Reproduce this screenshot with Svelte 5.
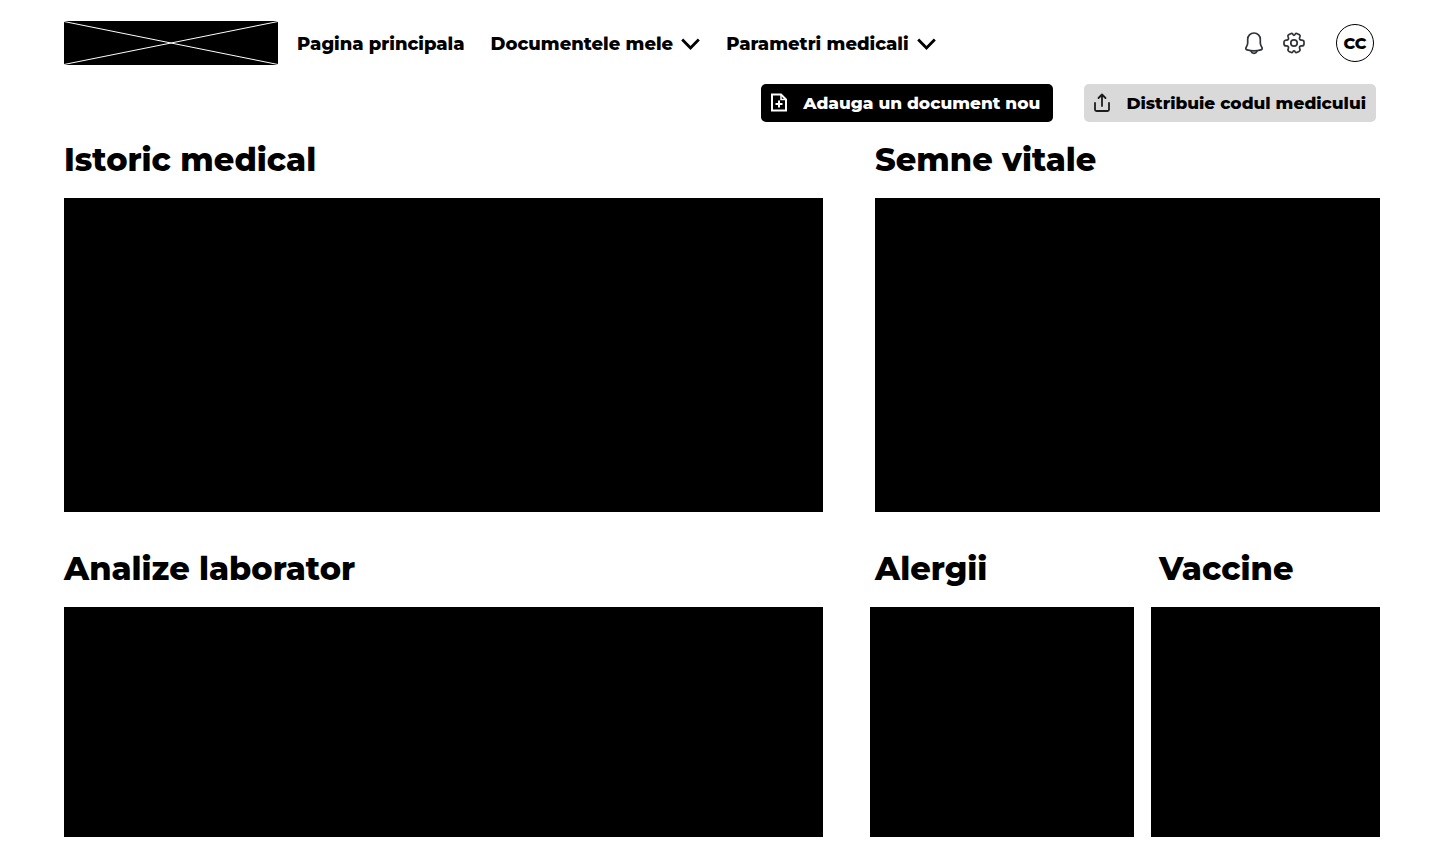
<script>
  const menus = ['Documentele mele', 'Parametri medicali'];
</script>

<div class="page">
  <header>
    <svg class="logo" viewBox="0 0 214 44" preserveAspectRatio="none" role="img" aria-label="Logo">
      <rect width="214" height="44" fill="#000" />
      <path d="M0 .5 214 43.5M0 43.5 214 .5" stroke="#fff" fill="none" />
    </svg>
    <nav>
      <a href="#principala">Pagina principala</a>
      {#each menus as label}
        <button type="button" class="menu">
          {label}
          <svg width="19" height="12" viewBox="0 0 19 12" aria-hidden="true">
            <path d="M1.2 1.5 9.5 10 17.8 1.5" fill="none" stroke="#000" stroke-width="2.8" />
          </svg>
        </button>
      {/each}
    </nav>
    <div class="tools">
      <button type="button" aria-label="Notificari">
        <svg width="20" height="24" viewBox="0 0 20 24" fill="none" stroke="#30343a" stroke-width="1.7" stroke-linecap="round" stroke-linejoin="round">
          <path d="M10 2C6.3 2 3.700 4.800 3.700 8.200V12c0 1.800-.5 2.700-1.500 4.200-.8 1.200-.4 2.300 1 2.700 4.400 1.300 9.200 1.300 13.600 0 1.400-.4 1.800-1.500 1-2.700C16.800 14.700 16.300 13.800 16.300 12V8.200C16.300 4.800 13.700 2 10 2Z" />
          <path d="M7 20.300c.5 1.300 1.600 2 3 2s2.500-.7 3-2" />
        </svg>
      </button>
      <button type="button" aria-label="Setari">
        <svg width="24" height="24" viewBox="0 0 24 24" fill="none" stroke="#30343a" stroke-width="1.7" stroke-linejoin="round">
          <circle cx="12" cy="12" r="3.200" />
          <path d="M8.700 2.700 7 3.600c-1 .6-1.300 1.500-.8 2.500.9 1.700.1 3-1.800 3-1.300 0-2.400.8-2.400 2v1.800c0 1.200 1.100 2 2.400 2 1.900 0 2.700 1.300 1.800 3-.5 1-.2 1.900.8 2.500l1.700.9c.9.5 1.700.2 2.200-.6.7-1.300 1.500-1.300 2.200 0 .5.8 1.300 1.100 2.200.6l1.700-.9c1-.6 1.300-1.500.8-2.500-.9-1.700-.1-3 1.800-3 1.300 0 2.400-.8 2.400-2v-1.800c0-1.200-1.100-2-2.400-2-1.900 0-2.700-1.300-1.800-3 .5-1 .2-1.900-.8-2.500l-1.700-.9c-.9-.5-1.700-.2-2.200.6-.7 1.300-1.500 1.300-2.200 0-.5-.8-1.300-1.100-2.200-.6Z" />
        </svg>
      </button>
      <button type="button" class="avatar">CC</button>
    </div>
  </header>

  <div class="actions">
    <button type="button" class="add">
      <svg width="18" height="20" viewBox="0 0 18 20" fill="none" stroke="#fff" stroke-width="2" aria-hidden="true">
        <path d="M2 1.500H11L16 6.500V17.500H2Z" />
        <path d="M11 1.500V6.500H16" stroke-width="1.500" />
        <path d="M9 7.500V14.500M5.500 11H12.500" />
      </svg>
      Adauga un document nou
    </button>
    <button type="button" class="share">
      <svg width="18" height="20" viewBox="0 0 18 20" fill="none" stroke="#1c1c1c" stroke-width="1.800" stroke-linecap="round" stroke-linejoin="round" aria-hidden="true">
        <path d="M9 13V2M5.500 5 9 1.500 12.500 5M2 10V16.500Q2 18 3.500 18H14.500Q16 18 16 16.500V10" />
      </svg>
      Distribuie codul medicului
    </button>
  </div>

  <main>
    <section class="history">
      <h2>Istoric medical</h2>
      <div class="panel"></div>
    </section>
    <section class="vitals">
      <h2>Semne vitale</h2>
      <div class="panel"></div>
    </section>
    <section class="labs">
      <h2>Analize laborator</h2>
      <div class="panel low"></div>
    </section>
    <section class="allergies">
      <h2>Alergii</h2>
      <div class="panel low"></div>
    </section>
    <section class="vaccines">
      <h2>Vaccine</h2>
      <div class="panel low"></div>
    </section>
  </main>
</div>

<style>
  :global(body) {
    background: #fff;
  }
  .page {
    padding: 21px 60px 31px 64px;
    font-family: Montserrat, Inter, sans-serif;
    font-weight: 800;
    color: #000;
  }
  button {
    display: flex;
    align-items: center;
    padding: 0;
    border: 0;
    background: none;
    color: inherit;
    font: inherit;
    white-space: nowrap;
    cursor: pointer;
  }
  svg {
    display: block;
    flex: none;
  }
  header {
    display: flex;
    align-items: center;
    height: 44px;
  }
  .logo {
    width: 214px;
    height: 44px;
  }
  nav {
    display: flex;
    align-items: center;
    gap: 26px;
    margin-left: 19px;
    padding-top: 2px;
    font-size: 18px;
    line-height: 24px;
  }
  nav a {
    color: inherit;
    text-decoration: none;
    white-space: nowrap;
  }
  .menu {
    gap: 8px;
  }
  .tools {
    display: flex;
    align-items: center;
    gap: 18px;
    margin-left: auto;
    padding-right: 6px;
  }
  .avatar {
    justify-content: center;
    box-sizing: border-box;
    width: 38px;
    height: 38px;
    margin-left: 12px;
    border: 1px solid #000;
    border-radius: 50%;
    font-size: 16px;
  }
  .actions {
    display: flex;
    justify-content: flex-end;
    gap: 31px;
    margin-top: 19px;
    padding-right: 4px;
    font-size: 17px;
    line-height: 22px;
  }
  .actions button {
    height: 38px;
    gap: 15px;
    padding: 0 10px 0 9px;
    border-radius: 5px;
  }
  .actions .add {
    padding-right: 13px;
    background: #000;
    color: #fff;
  }
  .actions .share {
    background: #d9d9d9;
  }
  main {
    display: grid;
    grid-template-columns: 759fr 47fr 264fr 17fr 229fr;
    row-gap: 35px;
    margin-top: 16px;
  }
  .history,
  .labs {
    grid-column: 1;
  }
  .vitals {
    grid-column: 3 / 6;
    padding-left: 5px;
  }
  .allergies {
    grid-column: 3;
  }
  .vaccines {
    grid-column: 5;
  }
  h2 {
    margin: 0 0 16px;
    font-size: 32px;
    font-weight: 800;
    line-height: 44px;
    white-space: nowrap;
  }
  .allergies h2 {
    padding-left: 5px;
  }
  .vaccines h2 {
    padding-left: 8px;
  }
  .panel {
    min-height: 314px;
    background: #000;
  }
  .panel.low {
    min-height: 230px;
  }
</style>
